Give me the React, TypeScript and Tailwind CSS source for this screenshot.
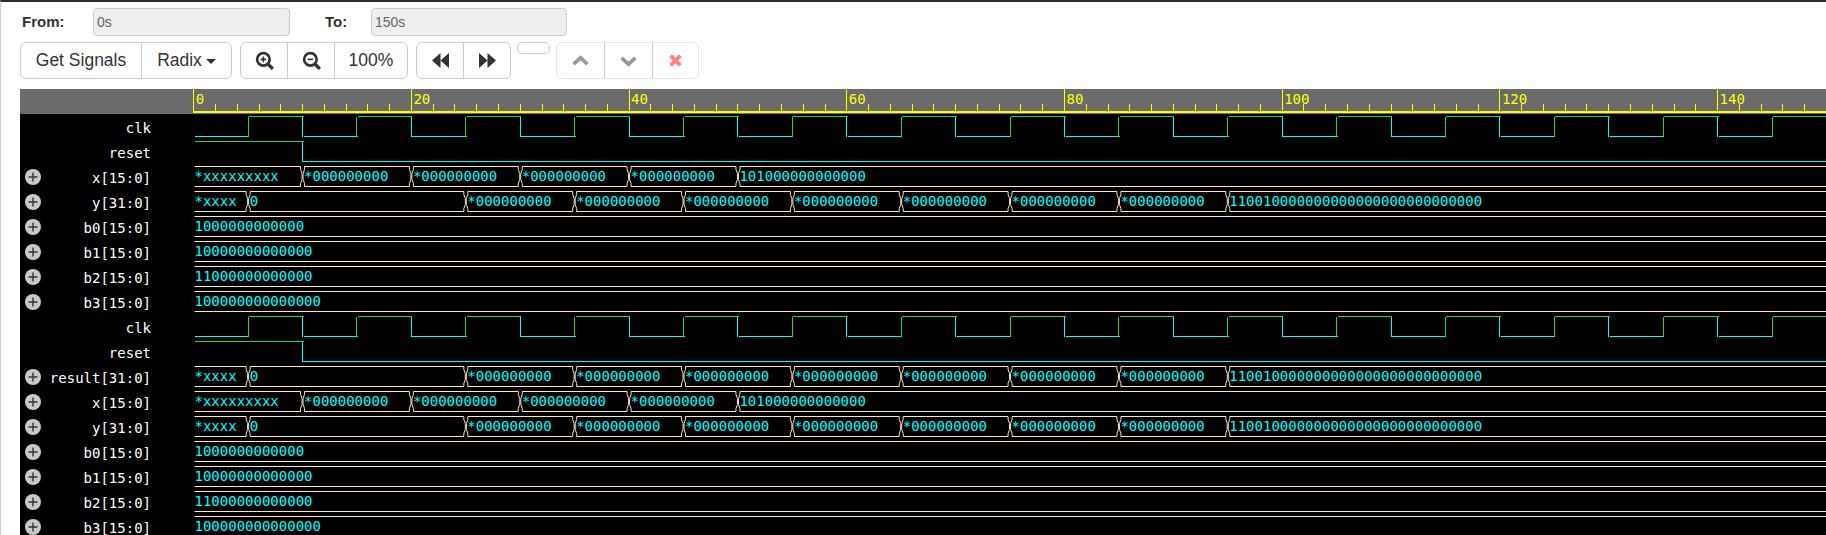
import React from "react";

const SCALE = 10.885;
const X0 = 0.7;
const END = 1640;
const xOf = (t: number) => X0 + SCALE * t;
const TOP = 2.5;
const BOTTOM = 22.5;

const GREEN = "#2fd02f";
const CYAN = "#00ffff";
const BISQUE = "#ffe4c4";

type Seg = { t: number; v: string };
type Row =
  | { name: string; kind: "clk" }
  | { name: string; kind: "reset" }
  | { name: string; kind: "bus"; segs: Seg[] };

const Z = "*000000000";
const xSegs: Seg[] = [
  { t: 0, v: "*xxxxxxxxx" },
  { t: 10, v: Z },
  { t: 20, v: Z },
  { t: 30, v: Z },
  { t: 40, v: Z },
  { t: 50, v: "101000000000000" },
];
const ySegs: Seg[] = [
  { t: 0, v: "*xxxx" },
  { t: 5, v: "0" },
  { t: 25, v: Z },
  { t: 35, v: Z },
  { t: 45, v: Z },
  { t: 55, v: Z },
  { t: 65, v: Z },
  { t: 75, v: Z },
  { t: 85, v: Z },
  { t: 95, v: "110010000000000000000000000000" },
];
const constant = (v: string): Seg[] => [{ t: 0, v }];
const b: Row[] = [
  { name: "b0[15:0]", kind: "bus", segs: constant("1000000000000") },
  { name: "b1[15:0]", kind: "bus", segs: constant("10000000000000") },
  { name: "b2[15:0]", kind: "bus", segs: constant("11000000000000") },
  { name: "b3[15:0]", kind: "bus", segs: constant("100000000000000") },
];
const rows: Row[] = [
  { name: "clk", kind: "clk" },
  { name: "reset", kind: "reset" },
  { name: "x[15:0]", kind: "bus", segs: xSegs },
  { name: "y[31:0]", kind: "bus", segs: ySegs },
  ...b,
  { name: "clk", kind: "clk" },
  { name: "reset", kind: "reset" },
  { name: "result[31:0]", kind: "bus", segs: ySegs },
  { name: "x[15:0]", kind: "bus", segs: xSegs },
  { name: "y[31:0]", kind: "bus", segs: ySegs },
  ...b,
];

function ClkWave() {
  const els: React.ReactNode[] = [];
  for (let t = 0; t < 150; t += 10) {
    const rise = xOf(t + 5);
    const fall = xOf(t + 10);
    els.push(
      <line key={`l${t}`} x1={t === 0 ? 2 : xOf(t) + 1} x2={rise + 1} y1={BOTTOM} y2={BOTTOM} stroke={CYAN} />,
      <line key={`r${t}`} x1={rise} x2={rise} y1={TOP} y2={BOTTOM} stroke={GREEN} />,
      <line key={`h${t}`} x1={rise + 1} x2={fall + 1} y1={TOP} y2={TOP} stroke={GREEN} />,
      <line key={`f${t}`} x1={fall} x2={fall} y1={TOP} y2={BOTTOM} stroke={CYAN} />
    );
  }
  return <g shapeRendering="crispEdges">{els}</g>;
}

function ResetWave() {
  const f = xOf(10);
  return (
    <g shapeRendering="crispEdges">
      <line x1={2} x2={f + 1} y1={TOP} y2={TOP} stroke={GREEN} />
      <line x1={f} x2={f} y1={TOP} y2={BOTTOM} stroke={CYAN} />
      <line x1={f} x2={END} y1={BOTTOM} y2={BOTTOM} stroke={CYAN} />
    </g>
  );
}

function BusWave({ segs }: { segs: Seg[] }) {
  return (
    <g>
      {segs.map((s, i) => {
        const a = i === 0 ? 1.5 : xOf(s.t) + 2;
        const next = segs[i + 1];
        const e = next ? xOf(next.t) - 2 : END;
        const left =
          i === 0
            ? `M${a} ${TOP}L${e} ${TOP}`
            : `M${a} ${TOP}L${a} ${TOP + 3}L${a - 1.5} ${TOP + 7}L${a - 1.5} ${BOTTOM - 7}L${a} ${BOTTOM - 3}L${a} ${BOTTOM}`;
        const topBot =
          i === 0
            ? `M${a} ${BOTTOM}L${e} ${BOTTOM}`
            : `M${a} ${TOP}L${e} ${TOP}M${a} ${BOTTOM}L${e} ${BOTTOM}`;
        const right = next
          ? `M${e} ${TOP}L${e} ${TOP + 3}L${e + 1.5} ${TOP + 7}L${e + 1.5} ${BOTTOM - 7}L${e} ${BOTTOM - 3}L${e} ${BOTTOM}`
          : "";
        return (
          <g key={i}>
            <path d={`${left}${topBot}${right}`} fill="none" stroke={BISQUE} />
            <text
              x={i === 0 ? 1.5 : xOf(s.t) + 1.5}
              y={17}
              className="fill-[#00ffff] font-['DejaVu_Sans_Mono',monospace] text-[14px]"
            >
              {s.v}
            </text>
          </g>
        );
      })}
    </g>
  );
}

function Ruler() {
  const ticks: React.ReactNode[] = [];
  for (let t = 0; t <= 150; t += 2) {
    const major = t % 20 === 0;
    ticks.push(
      <line key={t} x1={xOf(t)} x2={xOf(t)} y1={major ? 0 : 15} y2={23} stroke="#ffff00" />
    );
    if (major)
      ticks.push(
        <text
          key={`t${t}`}
          x={xOf(t) + 2}
          y={15}
          className="fill-[#ffff00] font-['DejaVu_Sans_Mono',monospace] text-[14px]"
        >
          {t}
        </text>
      );
  }
  return (
    <svg width={END} height={25} className="block shrink-0">
      <g shapeRendering="crispEdges">
        <rect x={0} y={22} width={END} height={1.5} fill="#ffff00" />
        {ticks}
      </g>
    </svg>
  );
}

function PlusBadge() {
  return (
    <svg width={16} height={16} viewBox="0 0 16 16" className="block">
      <circle cx={8} cy={8} r={8} fill="#c9c9c9" />
      <path d="M8 3.5v9M3.5 8h9" stroke="#333" strokeWidth={1.4} fill="none" />
    </svg>
  );
}

function SignalRow({ row }: { row: Row }) {
  return (
    <div className="flex h-[25px] items-center">
      <div className="flex h-full w-[173px] shrink-0 items-center">
        <div className="flex w-[21px] shrink-0 justify-end">
          {row.kind === "bus" ? <PlusBadge /> : null}
        </div>
        <div className="flex-1 pr-[42px] pt-[3px] text-right font-['DejaVu_Sans_Mono',monospace] text-[14px] leading-none text-white">
          {row.name}
        </div>
      </div>
      <svg width={END} height={25} className="block shrink-0">
        {row.kind === "clk" && <ClkWave />}
        {row.kind === "reset" && <ResetWave />}
        {row.kind === "bus" && <BusWave segs={row.segs} />}
      </svg>
    </div>
  );
}

function Cell({ w, children, last }: { w: string; children: React.ReactNode; last?: boolean }) {
  return (
    <div className={`flex h-full items-center justify-center ${w} ${last ? "" : "border-r border-[#cccccc]"}`}>
      {children}
    </div>
  );
}

const Mag = ({ minus }: { minus?: boolean }) => (
  <svg width={19} height={19} viewBox="0 0 17 17" className="block">
    <circle cx={7.5} cy={7.5} r={5.6} fill="none" stroke="#333" strokeWidth={2.4} />
    <path d="M11.5 11.5L16 16" stroke="#333" strokeWidth={3} fill="none" />
    <path d={minus ? "M5 7.5h5" : "M5 7.5h5M7.5 5v5"} stroke="#333" strokeWidth={1.4} fill="none" />
  </svg>
);

const Back = () => (
  <svg width={17} height={15} viewBox="0 0 16 14" className="block">
    <path d="M8 0v14L0 7zM16 0v14L8 7z" fill="#333" />
  </svg>
);
const Forward = () => (
  <svg width={17} height={15} viewBox="0 0 16 14" className="block">
    <path d="M0 0v14l8-7zM8 0v14l8-7z" fill="#333" />
  </svg>
);
const Chevron = ({ down }: { down?: boolean }) => (
  <svg width={17} height={12} viewBox="0 0 16 11" className="block">
    <path d={down ? "M1.5 2.5L8 8.5l6.5-6" : "M1.5 8.5L8 2.5l6.5 6"} fill="none" stroke="#999" strokeWidth={3.4} />
  </svg>
);
const Cross = () => (
  <svg width={13} height={13} viewBox="0 0 12 12" className="block">
    <path d="M1.5 1.5l9 9M10.5 1.5l-9 9" fill="none" stroke="#ff8080" strokeWidth={3.6} />
  </svg>
);

const group = "flex h-[37px] rounded-[6px] border";

export default function App() {
  return (
    <div className="flex h-[535px] w-[1826px] flex-col overflow-hidden border-l border-t-2 border-l-[#cfcfcf] border-t-[#2e2e2e] bg-white font-['Liberation_Sans',sans-serif] text-[#333333]">
      <div className="mt-[6px] flex h-[28px] items-center">
        <div className="ml-[21px] w-[71px] text-[15px] font-bold">From:</div>
        <div className="flex h-[28px] w-[197px] items-center rounded-[4px] border border-[#cccccc] bg-[#eeeeee] pl-[3px] text-[14px] text-[#666666]">
          0s
        </div>
        <div className="ml-[35px] w-[46px] text-[15px] font-bold">To:</div>
        <div className="flex h-[28px] w-[196px] items-center rounded-[4px] border border-[#cccccc] bg-[#eeeeee] pl-[3px] text-[14px] text-[#666666]">
          150s
        </div>
      </div>

      <div className="ml-[19px] mt-[6px] flex items-start text-[17.5px]">
        <div className={`${group} w-[212px] border-[#cccccc]`}>
          <Cell w="w-[121px]">Get Signals</Cell>
          <Cell w="flex-1" last>
            Radix
            <span className="ml-[4px] mt-[1px] h-0 w-0 border-x-[5px] border-t-[5px] border-x-transparent border-t-[#333333]" />
          </Cell>
        </div>
        <div className={`${group} ml-[8px] w-[168px] border-[#cccccc]`}>
          <Cell w="w-[47px]"><Mag /></Cell>
          <Cell w="w-[47px]"><Mag minus /></Cell>
          <Cell w="flex-1" last>100%</Cell>
        </div>
        <div className={`${group} ml-[8px] w-[95px] border-[#cccccc]`}>
          <Cell w="w-[47px]"><Back /></Cell>
          <Cell w="flex-1" last><Forward /></Cell>
        </div>
        <div className="ml-[6px] h-[12px] w-[33px] rounded-[5px] border border-[#cccccc]" />
        <div className={`${group} ml-[6px] w-[143px] border-[#e4e4e4]`}>
          <Cell w="w-[48px]"><Chevron /></Cell>
          <Cell w="w-[48px]"><Chevron down /></Cell>
          <Cell w="flex-1" last><Cross /></Cell>
        </div>
      </div>

      <div className="ml-[19px] mt-[10px] flex-1 overflow-hidden bg-black">
        <div className="flex h-[25px] bg-[#6b6b6b]">
          <div className="w-[173px] shrink-0" />
          <Ruler />
        </div>
        {rows.map((r, i) => (
          <SignalRow key={i} row={r} />
        ))}
      </div>
    </div>
  );
}
